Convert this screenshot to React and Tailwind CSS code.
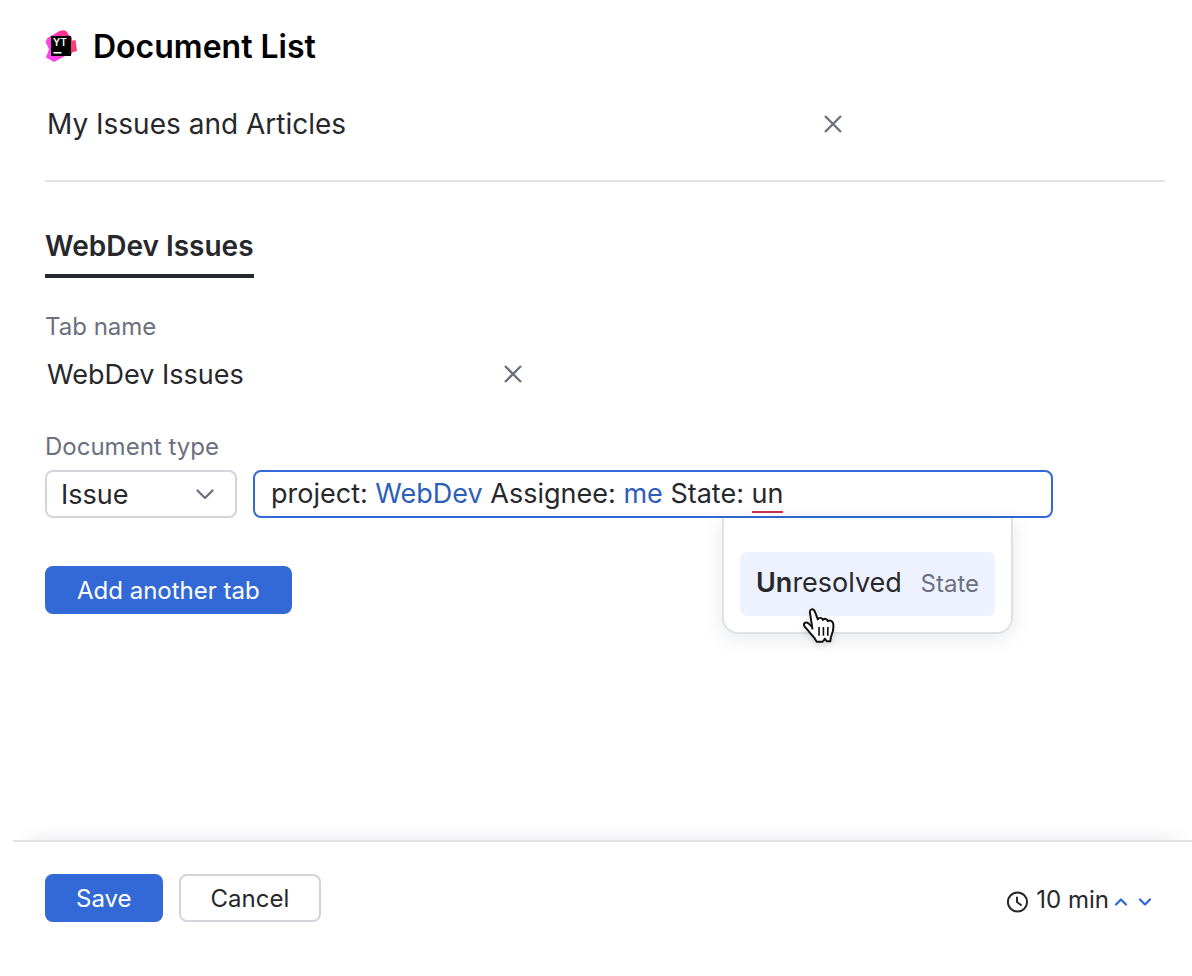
import React, { useState } from "react";

function Logo() {
  return (
    <svg viewBox="0 0 32 32" className="w-8 h-8 flex-shrink-0" aria-hidden="true">
      <defs>
        <linearGradient id="logoBody" x1="0" y1="26" x2="30" y2="6" gradientUnits="userSpaceOnUse">
          <stop offset="0.2" stopColor="#ff45ed" />
          <stop offset="0.8" stopColor="#ff318c" />
        </linearGradient>
      </defs>
      <path d="M25 11 L30.5 10 L32 21 L25 23 Z" fill="#ff3f72" />
      <path
        d="M12 2.5 C17 -1 22 0 23 4 L27 8 V24 L20 26 L9 32 L1 27.5 L4 19 L0.5 12 L2.5 8 Z"
        fill="url(#logoBody)"
      />
      <rect x="6" y="6" width="20" height="20" fill="#000" />
      <text x="8" y="15.5" fontSize="10" fontWeight="600" fill="#fff">
        YT
      </text>
      <rect x="8.5" y="22" width="8" height="1.6" fill="#fff" />
    </svg>
  );
}

function CloseIcon() {
  return (
    <svg viewBox="0 0 24 24" className="w-6 h-6" aria-hidden="true">
      <path d="M4 4 L20 20 M20 4 L4 20" fill="none" stroke="#6c707e" strokeWidth="2.3" />
    </svg>
  );
}

function ChevronIcon({ className, d }) {
  return (
    <svg viewBox="0 0 24 24" className={className} aria-hidden="true">
      <path
        d={d}
        fill="none"
        stroke="currentColor"
        strokeWidth="2.3"
        strokeLinecap="round"
        strokeLinejoin="round"
      />
    </svg>
  );
}

function ClockIcon() {
  return (
    <svg viewBox="0 0 24 24" className="w-6 h-6" aria-hidden="true">
      <g fill="none" stroke="#27282c" strokeWidth="2" strokeLinecap="round" strokeLinejoin="round">
        <circle cx="11.5" cy="12" r="9.6" />
        <path d="M11 7.5 V12 L15 15" />
      </g>
    </svg>
  );
}

function HandCursor() {
  return (
    <svg
      viewBox="0 0 32 36"
      className="absolute left-[77px] top-[88px] w-[35px] h-10 pointer-events-none drop-shadow-md"
      aria-hidden="true"
    >
      <path
        d="M10.5 21 L8.3 6.5 C7.4 2.6 11.3 1.2 12.7 4.8 L15.4 12 C16.2 10 19.4 10 20 12.6 C21 10.8 24 11.2 24.6 13.6 C26.2 12.2 29.2 13.2 29.5 16.2 C29.8 19.5 29.4 23 28.1 25.8 C27.3 27.8 27 29.2 26.8 32 H23.5 L22 29.6 L19.8 32.4 H14.3 C13 28.8 10 26.7 7.5 23.4 L3.2 18.3 C1.7 15.5 4.3 13.5 7 15.8 L10 18.8"
        fill="#fff"
        stroke="#111"
        strokeWidth="1.8"
        strokeLinejoin="round"
      />
      <path d="M16.5 19 V27 M20.5 19 V27 M24.5 19 V27" stroke="#111" strokeWidth="1.5" />
    </svg>
  );
}

function ClearableInput({ id, label, value, onChange, className }) {
  return (
    <div className={`flex items-center h-12 ${className}`}>
      <input
        id={id}
        aria-label={label}
        value={value}
        onChange={(e) => onChange(e.target.value)}
        className="flex-1 min-w-0 h-12 pl-[2px] bg-transparent outline-none"
      />
      <button type="button" aria-label="Clear" onClick={() => onChange("")}>
        <CloseIcon />
      </button>
    </div>
  );
}

export default function App() {
  const [title, setTitle] = useState("My Issues and Articles");
  const [tabName, setTabName] = useState("WebDev Issues");
  const [query, setQuery] = useState("project: WebDev Assignee: me State: un");
  const [minutes, setMinutes] = useState(10);

  // splits the query so that known values and the unfinished word are highlighted
  const tokens = query.split(/(WebDev|\bme\b|\bun$)/);

  return (
    <div className="min-h-screen flex flex-col pl-[13px] bg-white text-[#27282c] font-['Inter',sans-serif]">
      <main className="flex-1 pl-8 pr-[27px] pt-[30px]">
        <header className="flex items-center gap-4 h-8">
          <Logo />
          <h1 className="pt-[2px] text-[32px] leading-8 font-semibold text-black">Document List</h1>
        </header>

        <ClearableInput
          id="widget-title"
          label="Widget title"
          value={title}
          onChange={setTitle}
          className="mt-[38px] max-w-[800px] text-[28px]"
        />

        <hr className="mt-8 border-t-2 border-[#dfe1e5]" />

        <div role="tablist" className="flex mt-10">
          <button
            type="button"
            role="tab"
            aria-selected="true"
            className="h-14 pb-1 border-b-4 border-[#27282c] text-[28px] font-semibold"
          >
            WebDev Issues
          </button>
        </div>

        <label htmlFor="tab-name" className="block mt-8 leading-[34px] text-2xl text-[#6c707e]">
          Tab name
        </label>
        <ClearableInput
          id="tab-name"
          value={tabName}
          onChange={setTabName}
          className="mt-[6px] max-w-[480px] text-[27px]"
        />

        <label htmlFor="doc-type" className="block mt-8 leading-[34px] text-2xl text-[#6c707e]">
          Document type
        </label>
        <div className="flex gap-4 mt-[6px]">
          <div className="relative w-48 flex-shrink-0">
            <select
              id="doc-type"
              className="w-full h-12 pl-[14px] pr-12 pt-[2px] appearance-none border-2 border-[#d3d4dc] rounded-lg text-[27px] bg-white"
            >
              <option>Issue</option>
              <option>Article</option>
            </select>
            <ChevronIcon
              className="absolute right-5 top-3 w-6 h-6 text-[#6c707e] pointer-events-none"
              d="M4.5 8.5 L12 16 L19.5 8.5"
            />
          </div>

          <div className="relative flex-1 max-w-[800px]">
            <div className="relative flex items-center h-12 px-4 border-2 border-[#3369d6] rounded-lg bg-white text-[27px]">
              <div aria-hidden="true" className="whitespace-pre">
                {tokens.map((token, i) => {
                  if (token === "un") {
                    return (
                      <span key={i} className="inline-block h-10 leading-[42px] border-b-2 border-[#d1314b]">
                        {token}
                      </span>
                    );
                  }
                  return (
                    <span key={i} className={i % 2 ? "text-[#2f5eb9]" : ""}>
                      {token}
                    </span>
                  );
                })}
              </div>
              <input
                aria-label="Search query"
                value={query}
                onChange={(e) => setQuery(e.target.value)}
                className="absolute inset-0 w-full px-4 bg-transparent text-transparent outline-none"
              />
            </div>

            <div className="absolute left-[469px] top-12 w-[291px] pt-[34px] px-4 pb-4 border-2 border-t-0 border-[#dfe1e5] rounded-b-2xl bg-white shadow-[0_4px_20px_rgba(0,28,54,0.1)]">
              <button
                type="button"
                className="w-full h-16 px-4 pb-[2px] rounded-lg bg-[#eef2ff] whitespace-nowrap"
              >
                <span className="flex items-baseline justify-between">
                  <span className="text-[27px]">
                    <b className="font-semibold">Un</b>resolved
                  </span>
                  <span className="text-2xl text-[#6c707e]">State</span>
                </span>
              </button>
              <HandCursor />
            </div>
          </div>
        </div>

        <button
          type="button"
          className="mt-12 h-12 px-8 pt-[2px] rounded-lg bg-[#3369d6] text-2xl text-white"
        >
          Add another tab
        </button>
      </main>

      <footer className="flex items-start justify-between h-[136px] pt-8 pl-8 pr-[35px] border-t-2 border-[#dfe1e5] bg-white shadow-[0_-14px_20px_-16px_rgba(0,28,54,0.12)] [clip-path:inset(-40px_0_0_0)]">
        <div className="flex gap-4">
          <button
            type="button"
            className="h-12 px-[31px] pt-[2px] rounded-lg bg-[#3369d6] text-2xl text-white"
          >
            Save
          </button>
          <button
            type="button"
            className="h-12 px-[30px] pt-[2px] border-2 border-[#d3d4dc] rounded-lg text-2xl"
          >
            Cancel
          </button>
        </div>
        <div className="flex items-end h-10">
          <ClockIcon />
          <span className="ml-[6px] text-2xl leading-7">{minutes} min</span>
          <button type="button" aria-label="Increase" onClick={() => setMinutes(minutes + 1)}>
            <ChevronIcon className="w-6 h-6 text-[#3369d6]" d="M7 14.5 L12 9.5 L17 14.5" />
          </button>
          <button type="button" aria-label="Decrease" onClick={() => setMinutes(minutes - 1)}>
            <ChevronIcon className="w-6 h-6 text-[#3369d6]" d="M7 9.5 L12 14.5 L17 9.5" />
          </button>
        </div>
      </footer>
    </div>
  );
}
